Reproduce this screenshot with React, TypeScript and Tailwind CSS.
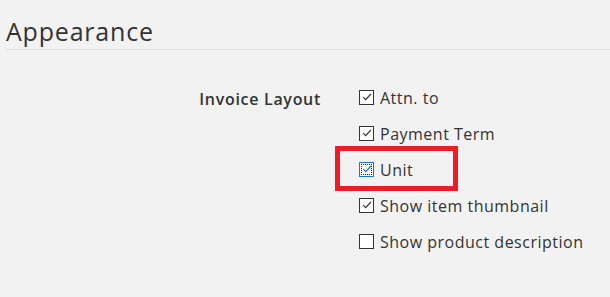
const options = [
  { label: "Attn. to", checked: true },
  { label: "Payment Term", checked: true },
  { label: "Unit", checked: true, focused: true },
  { label: "Show item thumbnail", checked: true },
  { label: "Show product description", checked: false },
];

function Box({ checked, focused }: { checked: boolean; focused?: boolean }) {
  return (
    <span
      className={
        "mb-[2px] flex h-[15px] w-[15px] shrink-0 items-center justify-center border bg-white " +
        (focused ? "border-[#1a73e8] outline-1 outline-dotted outline-[#222] -outline-offset-3" : "border-[#333]")
      }
    >
      {checked && (
        <svg viewBox="0 0 14 14" className="h-[12px] w-[12px]">
          <path
            d="M2.5 7.2 L5.5 10 L11.5 3.5"
            fill="none"
            stroke={focused ? "#1a73e8" : "#333"}
            strokeWidth="1.4"
          />
        </svg>
      )}
    </span>
  );
}

export default function App() {
  return (
    <div
      className="h-[297px] w-[610px] overflow-hidden bg-[#f2f2f2] text-[#333]"
      style={{ fontFamily: "'Open Sans', 'Noto Sans', sans-serif" }}
    >
      <div className="pl-[6px] pt-[15px]">
        <h2 className="text-[25px] font-normal leading-[32px] tracking-[0.8px] text-[#333]">
          Appearance
        </h2>
        <div className="mt-[2px] h-px bg-[#dddddd]" />
      </div>

      <div className="mt-[37px] flex">
        <div className="w-[321px] text-right text-[16px] font-semibold tracking-[0.7px]">
          Invoice Layout
        </div>
        <div className="ml-[38px] flex flex-col gap-[14px]">
          {options.map((o) => (
            <label
              key={o.label}
              className="relative flex items-center gap-[6px] text-[16px] leading-[22px] tracking-[0.5px]"
            >
              <Box checked={o.checked} focused={o.focused} />
              <span>{o.label}</span>
              {o.focused && (
                <span className="absolute -left-[24px] -top-[13px] h-[45px] w-[123px] border-[5px] border-[#ee1c25]" />
              )}
            </label>
          ))}
        </div>
      </div>
    </div>
  );
}
